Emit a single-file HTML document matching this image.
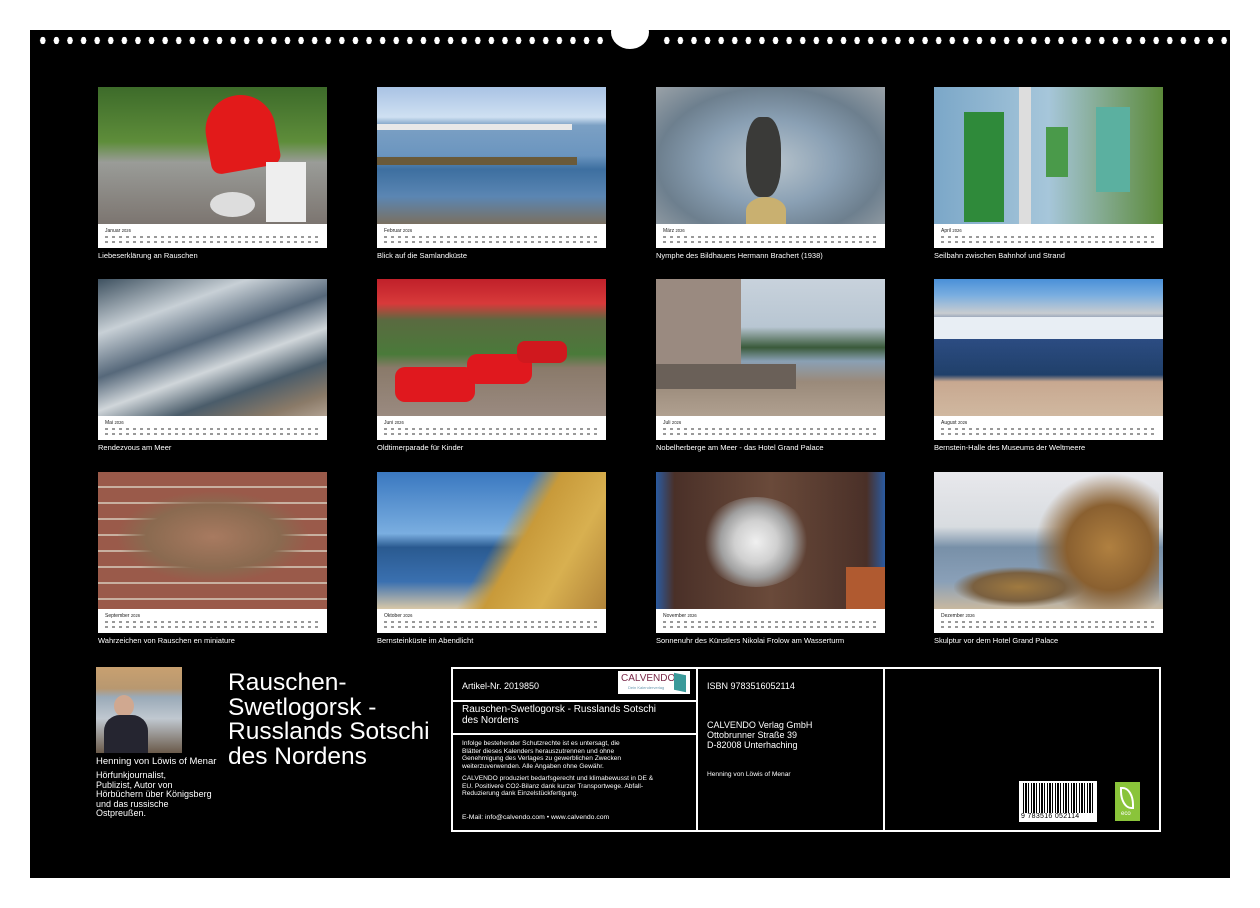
<!DOCTYPE html>
<html><head><meta charset="utf-8">
<style>
*{margin:0;padding:0;box-sizing:border-box}
body{width:1260px;height:908px;background:#fff;position:relative;overflow:hidden;font-family:"Liberation Sans",sans-serif}
#bg{position:absolute;left:30px;top:30px;width:1200px;height:848px;background:#000}
.holes{position:absolute;top:36px;height:9px;background:radial-gradient(ellipse 2.8px 3.8px at 50% 50%,#fff 95%,transparent 100%);background-size:13.6px 9px;background-repeat:repeat-x}
#notch{position:absolute;left:611px;top:15px;width:38px;height:34px;border-radius:50%;background:#fff}
.t{position:absolute;width:229px}
.img{height:137px;position:relative;overflow:hidden}
.cal{height:24px;background:#fff;position:relative;font-size:4px;color:#555}
.cal b{position:absolute;left:7px;top:4px;font-weight:normal;font-size:5px;color:#222}
.cal i{position:absolute;left:7px;right:7px;height:2px;background:repeating-linear-gradient(90deg,#999 0 3px,transparent 3px 7px)}
.cap{position:absolute;left:0;top:164px;color:#fff;font-size:7.5px;white-space:nowrap}
.box{position:absolute;border:2px solid #fff}
.w{color:#fff;position:absolute}
</style></head><body>
<div id="bg"></div>
<div class="holes" style="left:36px;width:570px"></div>
<div class="holes" style="left:660px;width:570px"></div>
<div id="notch"></div>

<!-- row 1 -->
<div class="t" style="left:98px;top:87px">
 <div class="img" style="background:linear-gradient(#3d6b2a 0,#5e8d3a 40%,#9a9c98 55%,#7c7570 100%)">
  <div style="position:absolute;left:108px;top:8px;width:70px;height:75px;background:#e21a1a;border-radius:35px 35px 10px 10px;transform:rotate(-10deg)"></div>
  <div style="position:absolute;left:168px;top:75px;width:40px;height:60px;background:#eee"></div>
  <div style="position:absolute;left:112px;top:105px;width:45px;height:25px;background:#ddd;border-radius:50%"></div>
 </div>
 <div class="cal"><b>Januar <small>2026</small></b><i style="top:12px"></i><i style="top:17px"></i></div>
 <div class="cap">Liebeserklärung an Rauschen</div>
</div>
<div class="t" style="left:377px;top:87px">
 <div class="img" style="background:linear-gradient(#a9c3e4 0,#cfe0f2 22%,#7ba0c4 28%,#6b95bf 50%,#3d6fa0 60%,#5b86b3 80%,#7a7060 100%)">
  <div style="position:absolute;left:0;top:37px;width:195px;height:6px;background:#e8e8e8"></div>
  <div style="position:absolute;left:0;top:70px;width:200px;height:8px;background:#6a5a3a"></div>
 </div>
 <div class="cal"><b>Februar <small>2026</small></b><i style="top:12px"></i><i style="top:17px"></i></div>
 <div class="cap">Blick auf die Samlandküste</div>
</div>
<div class="t" style="left:656px;top:87px">
 <div class="img" style="background:radial-gradient(ellipse at 50% 55%,#b8c4cc 0,#8aa0b4 40%,#6d7f8e 70%,#9aa2a8 100%)">
  <div style="position:absolute;left:90px;top:30px;width:35px;height:80px;background:#3a3a38;border-radius:40%"></div>
  <div style="position:absolute;left:90px;top:110px;width:40px;height:27px;background:#c9b070;border-radius:50% 50% 0 0"></div>
 </div>
 <div class="cal"><b>März <small>2026</small></b><i style="top:12px"></i><i style="top:17px"></i></div>
 <div class="cap">Nymphe des Bildhauers Hermann Brachert (1938)</div>
</div>
<div class="t" style="left:934px;top:87px">
 <div class="img" style="background:linear-gradient(90deg,#7ba7c8,#a6c6da 50%,#5c8a3a 100%)">
  <div style="position:absolute;left:30px;top:25px;width:40px;height:110px;background:#2f8a3a"></div>
  <div style="position:absolute;left:85px;top:0;width:12px;height:137px;background:#ddd"></div>
  <div style="position:absolute;left:112px;top:40px;width:22px;height:50px;background:#4a9a4a"></div>
  <div style="position:absolute;left:162px;top:20px;width:34px;height:85px;background:#5bb0a0"></div>
 </div>
 <div class="cal"><b>April <small>2026</small></b><i style="top:12px"></i><i style="top:17px"></i></div>
 <div class="cap">Seilbahn zwischen Bahnhof und Strand</div>
</div>

<!-- row 2 -->
<div class="t" style="left:98px;top:279px">
 <div class="img" style="background:linear-gradient(160deg,#3e5160 0,#c8d0d6 25%,#56687a 45%,#d0d6da 60%,#4a5c6a 75%,#8a7a68 90%,#b0a090 100%)"></div>
 <div class="cal"><b>Mai <small>2026</small></b><i style="top:12px"></i><i style="top:17px"></i></div>
 <div class="cap">Rendezvous am Meer</div>
</div>
<div class="t" style="left:377px;top:279px">
 <div class="img" style="background:linear-gradient(#c0202a 0,#d83a3a 18%,#5a6a40 30%,#4a7a3a 55%,#8a7a6a 65%,#9a8a80 100%)">
  <div style="position:absolute;left:18px;top:88px;width:80px;height:35px;background:#e0181e;border-radius:10px"></div>
  <div style="position:absolute;left:90px;top:75px;width:65px;height:30px;background:#e0181e;border-radius:10px"></div>
  <div style="position:absolute;left:140px;top:62px;width:50px;height:22px;background:#d0181e;border-radius:8px"></div>
 </div>
 <div class="cal"><b>Juni <small>2026</small></b><i style="top:12px"></i><i style="top:17px"></i></div>
 <div class="cap">Oldtimerparade für Kinder</div>
</div>
<div class="t" style="left:656px;top:279px">
 <div class="img" style="background:linear-gradient(#c8d2dc 0,#b8c6d2 35%,#3a5a3a 50%,#8aa0b4 60%,#9a8a7a 75%,#b0a090 100%)">
  <div style="position:absolute;left:0;top:0;width:85px;height:110px;background:#9a8a80"></div>
  <div style="position:absolute;left:0;top:85px;width:140px;height:25px;background:#6a6058"></div>
 </div>
 <div class="cal"><b>Juli <small>2026</small></b><i style="top:12px"></i><i style="top:17px"></i></div>
 <div class="cap">Nobelherberge am Meer - das Hotel Grand Palace</div>
</div>
<div class="t" style="left:934px;top:279px">
 <div class="img" style="background:linear-gradient(#4a90d8 0,#7aaee0 12%,#c8ccd0 25%,#30508a 35%,#20406a 70%,#c8a890 75%,#d0b8a0 100%)">
  <div style="position:absolute;left:0;top:38px;width:229px;height:22px;background:#e8eef4"></div>
 </div>
 <div class="cal"><b>August <small>2026</small></b><i style="top:12px"></i><i style="top:17px"></i></div>
 <div class="cap">Bernstein-Halle des Museums der Weltmeere</div>
</div>

<!-- row 3 -->
<div class="t" style="left:98px;top:472px">
 <div class="img" style="background:repeating-linear-gradient(#9a5a4a 0 14px,#c8b0a0 14px 16px)">
  <div style="position:absolute;left:20px;top:20px;width:190px;height:90px;background:radial-gradient(ellipse,#a87a60 0,#8a6a50 50%,transparent 72%)"></div>
 </div>
 <div class="cal"><b>September <small>2026</small></b><i style="top:12px"></i><i style="top:17px"></i></div>
 <div class="cap">Wahrzeichen von Rauschen en miniature</div>
</div>
<div class="t" style="left:377px;top:472px">
 <div class="img" style="background:linear-gradient(#3a78c0 0,#7aaee0 45%,#2a5a90 55%,#3a70b0 80%,#d8c8a8 100%)">
  <div style="position:absolute;left:60px;top:0;width:200px;height:137px;background:linear-gradient(120deg,transparent 35%,#c89a3a 45%,#d8b050 65%,#a07030 100%)"></div>
 </div>
 <div class="cal"><b>Oktober <small>2026</small></b><i style="top:12px"></i><i style="top:17px"></i></div>
 <div class="cap">Bernsteinküste im Abendlicht</div>
</div>
<div class="t" style="left:656px;top:472px">
 <div class="img" style="background:linear-gradient(90deg,#2a5aa0 0,#4a3028 8%,#6a4a3a 50%,#4a3028 92%,#2a5aa0 100%)">
  <div style="position:absolute;left:45px;top:25px;width:110px;height:90px;border-radius:50%;background:radial-gradient(circle,#f0f0f0 0,#d0d0d0 30%,#a0a0a0 50%,transparent 72%)"></div>
  <div style="position:absolute;left:190px;top:95px;width:40px;height:42px;background:#b05a30"></div>
 </div>
 <div class="cal"><b>November <small>2026</small></b><i style="top:12px"></i><i style="top:17px"></i></div>
 <div class="cap">Sonnenuhr des Künstlers Nikolai Frolow am Wasserturm</div>
</div>
<div class="t" style="left:934px;top:472px">
 <div class="img" style="background:linear-gradient(#e8e8ec 0,#d8dce0 40%,#7890a8 55%,#8aa0b8 80%,#c8b8a0 100%)">
  <div style="position:absolute;left:100px;top:0;width:125px;height:137px;background:radial-gradient(ellipse at 60% 55%,#b08040 0,#8a6030 40%,transparent 70%)"></div>
  <div style="position:absolute;left:20px;top:95px;width:130px;height:40px;background:radial-gradient(ellipse,#a07a40 0,#7a6040 50%,transparent 72%)"></div>
 </div>
 <div class="cal"><b>Dezember <small>2026</small></b><i style="top:12px"></i><i style="top:17px"></i></div>
 <div class="cap">Skulptur vor dem Hotel Grand Palace</div>
</div>

<!-- author -->
<div style="position:absolute;left:96px;top:667px;width:86px;height:86px;background:linear-gradient(#c8a070 0,#b89870 25%,#9aaab8 35%,#c0c8d0 60%,#6a5a4a 100%)">
 <div style="position:absolute;left:18px;top:28px;width:20px;height:22px;border-radius:50%;background:#d0a890"></div>
 <div style="position:absolute;left:8px;top:48px;width:44px;height:38px;border-radius:16px 16px 0 0;background:#252530"></div>
</div>
<div class="w" style="left:96px;top:756px;font-size:9.5px">Henning von Löwis of Menar</div>
<div class="w" style="left:96px;top:771px;font-size:9px;line-height:9.6px">Hörfunkjournalist,<br>Publizist, Autor von<br>Hörbüchern über Königsberg<br>und das russische<br>Ostpreußen.</div>
<div class="w" style="left:228px;top:671px;font-size:24.5px;line-height:24.5px">Rauschen-<br>Swetlogorsk -<br>Russlands Sotschi<br>des Nordens</div>

<!-- info box -->
<div class="box" style="left:451px;top:667px;width:710px;height:165px"></div>
<div class="box" style="left:451px;top:667px;width:247px;height:35px"></div>
<div class="box" style="left:451px;top:700px;width:247px;height:35px"></div>
<div class="box" style="left:451px;top:733px;width:247px;height:99px"></div>
<div class="box" style="left:696px;top:667px;width:189px;height:165px"></div>
<div style="position:absolute;left:618px;top:671px;width:72px;height:23px;background:#fff">
 <div style="position:absolute;left:3px;top:2px;color:#7a2a4a;font-size:10px">CALVENDO</div>
 <div style="position:absolute;left:10px;top:14px;color:#6a9ab0;font-size:4px">Dein Kalenderverlag</div>
 <div style="position:absolute;left:56px;top:3px;width:12px;height:17px;background:#3a9a9a;transform:skewY(12deg)"></div>
</div>
<div class="w" style="left:462px;top:681px;font-size:9px">Artikel-Nr. 2019850</div>
<div class="w" style="left:462px;top:704px;font-size:10px;line-height:11px">Rauschen-Swetlogorsk - Russlands Sotschi<br>des Nordens</div>
<div class="w" style="left:462px;top:740px;font-size:6.6px;line-height:7.6px">Infolge bestehender Schutzrechte ist es untersagt, die<br>Blätter dieses Kalenders herauszutrennen und ohne<br>Genehmigung des Verlages zu gewerblichen Zwecken<br>weiterzuverwenden. Alle Angaben ohne Gewähr.</div>
<div class="w" style="left:462px;top:775px;font-size:6.6px;line-height:7.6px">CALVENDO produziert bedarfsgerecht und klimabewusst in DE &amp;<br>EU. Positivere CO2-Bilanz dank kurzer Transportwege. Abfall-<br>Reduzierung dank Einzelstückfertigung.</div>
<div class="w" style="left:462px;top:814px;font-size:6.8px">E-Mail: info@calvendo.com • www.calvendo.com</div>
<div class="w" style="left:707px;top:681px;font-size:9px">ISBN 9783516052114</div>
<div class="w" style="left:707px;top:720px;font-size:9px;line-height:10px">CALVENDO Verlag GmbH<br>Ottobrunner Straße 39<br>D-82008 Unterhaching</div>
<div class="w" style="left:707px;top:771px;font-size:6.6px">Henning von Löwis of Menar</div>
<div style="position:absolute;left:1019px;top:781px;width:78px;height:41px;background:#fff">
 <div style="position:absolute;left:4px;top:2px;width:70px;height:30px;background:repeating-linear-gradient(90deg,#000 0 1px,#fff 1px 2px,#000 2px 4px,#fff 4px 5px,#000 5px 6px,#fff 6px 8px)"></div>
 <div style="position:absolute;left:2px;top:32px;font-size:7px;color:#000;letter-spacing:0.3px">9 783516 052114</div>
</div>
<div style="position:absolute;left:1115px;top:782px;width:25px;height:39px;background:#8ac43a">
 <div style="position:absolute;left:5px;top:5px;width:14px;height:22px;border:2px solid #fff;border-radius:0 80% 0 80%"></div>
 <div style="position:absolute;left:6px;top:29px;font-size:6px;color:#fff">eco</div>
</div>
</body></html>
